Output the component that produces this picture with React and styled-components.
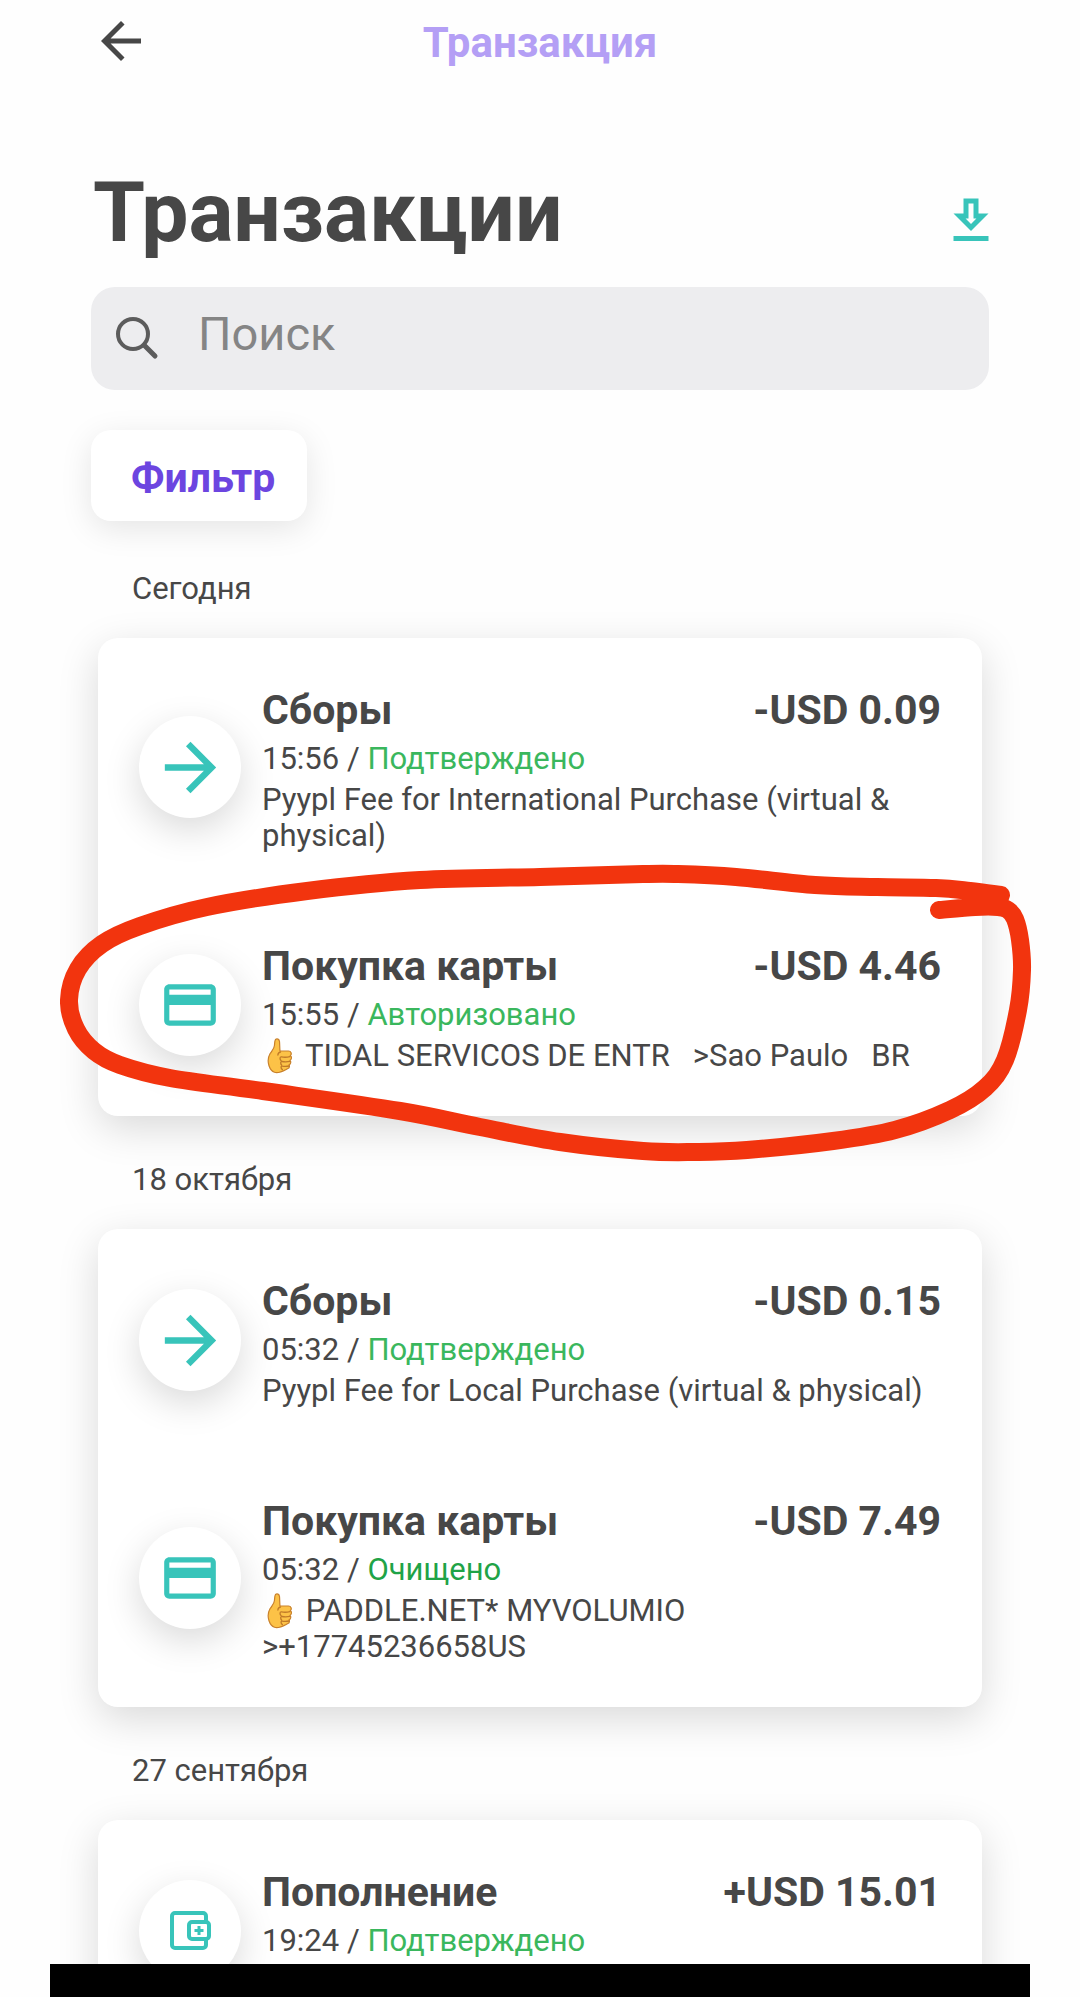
import React from 'react';
import styled, { createGlobalStyle } from 'styled-components';
import { MdArrowBack, MdArrowForward, MdCreditCard, MdOutlineDownload } from 'react-icons/md';

const GlobalStyle = createGlobalStyle`
  * {
    box-sizing: border-box;
  }

  body {
    margin: 0;
    background-color: #fefefe;
    color: #474747;
    font-family: Roboto, 'Noto Sans', sans-serif;
  }

  h1, h2, h3, p, ul {
    margin: 0;
    padding: 0;
  }
`;

const Screen = styled.div`
  display: flex;
  flex-direction: column;
  height: 100vh;
  overflow: hidden;
`;

const Content = styled.main`
  flex: 1;
  min-height: 0;
  padding: 0 91px;
  overflow: hidden;
`;

const Header = styled.header`
  display: grid;
  grid-template-columns: 1fr auto 1fr;
  align-items: center;
  padding: 11px 91px;
`;

const IconButton = styled.button`
  display: flex;
  justify-self: start;
  padding: 0;
  border: none;
  background: none;
  color: ${(props) => props.$color};
  font-size: 60px;
  cursor: pointer;
`;

const HeaderTitle = styled.p`
  padding-top: 4px;
  color: #b49ff5;
  font-size: 42px;
  font-weight: bold;
  line-height: 48px;
`;

const TitleRow = styled.div`
  display: flex;
  align-items: flex-end;
  justify-content: space-between;
  margin: 83px -12px 26px 2px;

  button {
    margin-bottom: 10px;
  }
`;

const Title = styled.h1`
  font-size: 84px;
  line-height: 96px;
`;

const SearchBox = styled.label`
  display: flex;
  align-items: center;
  gap: 38px;
  height: 103px;
  padding: 0 24px;
  border-radius: 24px;
  background-color: #ededef;
`;

const SearchInput = styled.input`
  flex: 1;
  min-width: 0;
  padding: 0 0 10px;
  border: none;
  outline: none;
  background: none;
  color: #474747;
  font-family: inherit;
  font-size: 47px;

  &::placeholder {
    color: #858585;
    opacity: 1;
  }
`;

const FilterButton = styled.button`
  display: block;
  height: 91px;
  margin-top: 40px;
  padding: 4px 32px 0 40px;
  border: none;
  border-radius: 20px;
  background-color: #fff;
  box-shadow: 0 8px 32px rgba(0, 0, 0, 0.1);
  color: #6c45e0;
  font-family: inherit;
  font-size: 41px;
  font-weight: bold;
  cursor: pointer;
`;

const Groups = styled.div`
  padding: 4px 7px 0;
`;

const DateLabel = styled.h2`
  padding: 46px 34px 31px;
  font-size: 31px;
  font-weight: normal;
  line-height: 36px;
`;

const Card = styled.ul`
  position: relative;
  padding: 1px 0;
  border-radius: 20px;
  background-color: #fff;
  box-shadow: 0 12px 40px rgba(0, 0, 0, 0.15);
  list-style: none;
`;

const Row = styled.li`
  display: flex;
  align-items: center;
  gap: 21px;
  padding: 0 41px;
`;

const Circle = styled.div`
  display: flex;
  flex: none;
  align-items: center;
  justify-content: center;
  width: 102px;
  height: 102px;
  border-radius: 50%;
  background-color: #fff;
  box-shadow: 0 12px 36px rgba(0, 0, 0, 0.15);
  color: #38c4ba;
`;

const Details = styled.div`
  flex: 1;
  min-width: 0;
  padding: 47px 0 41px;
`;

const NameLine = styled.div`
  display: flex;
  justify-content: space-between;
  margin-bottom: 7px;
  font-size: 41px;
  font-weight: bold;
  line-height: 48px;
`;

const Name = styled.h3`
  font-size: inherit;
`;

const Text = styled.p`
  font-size: 31px;
  line-height: 36px;
  white-space: pre-wrap;

  & + & {
    margin-top: 5px;
  }
`;

const Status = styled.span`
  color: ${(props) => (props.$cleared ? '#1fa347' : '#3ab75d')};
`;

const Emoji = styled.svg`
  width: 36px;
  height: 36px;
  vertical-align: bottom;
`;

const Mark = styled.svg`
  position: absolute;
  z-index: 2;
  top: 222px;
  left: -38px;
  width: calc(100% + 96px);
  pointer-events: none;
`;

const NavBar = styled.div`
  flex: none;
  height: 33px;
  margin: 0 50px;
  background-color: #000;
`;

const SearchIcon = () => (
  <svg width="45" height="45" viewBox="0 0 45 45" fill="none" stroke="#5c5c5c" strokeLinecap="round">
    <circle cx="18" cy="18" r="15" strokeWidth="4" />
    <path d="M29.5 29.5 40 40" strokeWidth="5" />
  </svg>
);

const WalletIcon = () => (
  <svg width="42" height="42" viewBox="0 0 42 42" fill="none" stroke="currentColor" strokeWidth="4">
    <path d="M37 11V6a3 3 0 0 0-3-3H6a3 3 0 0 0-3 3v29a3 3 0 0 0 3 3h28a3 3 0 0 0 3-3v-5" />
    <rect x="20" y="12" width="20" height="17" rx="3" />
    <path d="M30 16v9M25.5 20.5h9" strokeWidth="3" />
  </svg>
);

const ThumbIcon = () => (
  <Emoji viewBox="0 0 36 36" role="img" aria-label="👍">
    <path
      d="M13.500 1.500c1.600-1.300 3.700-.3 4 2 .3 3 .1 6.200.5 9.500h8.500c2.600 0 3.600 3 1.900 4.500 1.600 1.400 1.300 3.800-.3 4.800 1.100 1.500.7 3.600-1 4.500.7 1.600 0 3.300-1.600 4-3 1.500-8.500 5-13 3.500-2.500-.8-4.500-3.500-5.500-6.500-1.200-3.800-1-8.500 1-12 1.600-2.800 4-4.600 4.400-8 .3-2.200.1-4.600 1.100-6.300z"
      fill="#fcc247"
      stroke="#c9812b"
      strokeWidth="1.200"
    />
    <path
      d="M18.500 14c-1.500.3-2.500 1.300-2.600 3M28 18.700c-3 .6-6 .7-8.500.2-1.800-.4-2 2.700-.3 3.800M28 23.400c-3 .6-5.500.6-8 .1-1.600-.2-1.800 2.500-.2 3.700M27 28c-2.500.5-4.500.5-6.800.1-1.500-.2-1.500 2.400.2 3.500"
      fill="none"
      stroke="#c07a28"
      strokeWidth="1.300"
      strokeLinecap="round"
    />
  </Emoji>
);

const GreenDotIcon = () => (
  <Emoji viewBox="0 0 36 36" aria-hidden="true">
    <circle cx="18" cy="18" r="15" fill="#2faf4a" />
  </Emoji>
);

const icons = {
  fee: <MdArrowForward size={77} />,
  card: <MdCreditCard size={62} />,
  topup: <WalletIcon />,
};

const groups = [
  {
    date: 'Сегодня',
    items: [
      {
        icon: 'fee',
        name: 'Сборы',
        amount: '-USD 0.09',
        time: '15:56',
        status: 'Подтверждено',
        text: 'Pyypl Fee for International Purchase (virtual & physical)',
      },
      {
        icon: 'card',
        name: 'Покупка карты',
        amount: '-USD 4.46',
        time: '15:55',
        status: 'Авторизовано',
        emoji: <ThumbIcon />,
        text: ' TIDAL SERVICOS DE ENTR   >Sao Paulo   BR',
      },
    ],
    marked: true,
  },
  {
    date: '18 октября',
    items: [
      {
        icon: 'fee',
        name: 'Сборы',
        amount: '-USD 0.15',
        time: '05:32',
        status: 'Подтверждено',
        text: 'Pyypl Fee for Local Purchase (virtual & physical)',
      },
      {
        icon: 'card',
        name: 'Покупка карты',
        amount: '-USD 7.49',
        time: '05:32',
        status: 'Очищено',
        cleared: true,
        emoji: <ThumbIcon />,
        text: ' PADDLE.NET* MYVOLUMIO >+17745236658US',
      },
    ],
  },
  {
    date: '27 сентября',
    items: [
      {
        icon: 'topup',
        name: 'Пополнение',
        amount: '+USD 15.01',
        time: '19:24',
        status: 'Подтверждено',
        emoji: <GreenDotIcon />,
      },
    ],
  },
];

// points of the hand-drawn loop
const loop = [
  [941, 35], [910, 31], [876, 28], [817, 27], [755, 25], [676, 17], [618, 14], [583, 14],
  [480, 17], [360, 20], [247, 31], [147, 47], [80, 66], [42, 84], [18, 109],
  [9, 140], [16, 169], [34, 191], [60, 205], [110, 218], [203, 231], [340, 251],
  [420, 267], [500, 282], [583, 291], [635, 292], [687, 290], [773, 281],
  [835, 270], [890, 250], [925, 228], [945, 200], [958, 150], [962, 110], [960, 80],
  [955, 59], [948, 50], [938, 47], [915, 47], [879, 50],
];

// smooth curve through all the points
const smooth = (pts) =>
  pts.slice(0, -1).reduce((d, p, i) => {
    const before = pts[i - 1] || p;
    const next = pts[i + 1];
    const after = pts[i + 2] || next;
    const c1 = [p[0] + (next[0] - before[0]) / 6, p[1] + (next[1] - before[1]) / 6];
    const c2 = [next[0] - (after[0] - p[0]) / 6, next[1] - (after[1] - p[1]) / 6];
    return `${d}C${c1} ${c2} ${next}`;
  }, `M${pts[0]}`);

const Transaction = ({ item }) => (
  <Row>
    <Circle>{icons[item.icon]}</Circle>
    <Details>
      <NameLine>
        <Name>{item.name}</Name>
        <span>{item.amount}</span>
      </NameLine>
      <Text>
        {item.time} / <Status $cleared={item.cleared}>{item.status}</Status>
      </Text>
      <Text>
        {item.emoji}
        {item.text}
      </Text>
    </Details>
  </Row>
);

const App = () => {
  return (
    <Screen>
      <GlobalStyle />
      <Header>
        <IconButton type="button" aria-label="Назад" $color="#474747">
          <MdArrowBack />
        </IconButton>
        <HeaderTitle>Транзакция</HeaderTitle>
      </Header>
      <Content>
        <TitleRow>
          <Title>Транзакции</Title>
          <IconButton type="button" aria-label="Скачать" $color="#38c4ba">
            <MdOutlineDownload />
          </IconButton>
        </TitleRow>
        <SearchBox>
          <SearchIcon />
          <SearchInput type="text" placeholder="Поиск" aria-label="Поиск" />
        </SearchBox>
        <FilterButton type="button">Фильтр</FilterButton>
        <Groups>
          {groups.map((group) => (
            <section key={group.date}>
              <DateLabel>{group.date}</DateLabel>
              <Card>
                {group.items.map((item) => (
                  <Transaction key={item.name} item={item} />
                ))}
                {group.marked && (
                  <Mark viewBox="0 0 980 306" fill="none" aria-hidden="true">
                    <path d={smooth(loop)} stroke="#f2340e" strokeWidth="18" strokeLinecap="round" strokeLinejoin="round" />
                  </Mark>
                )}
              </Card>
            </section>
          ))}
        </Groups>
      </Content>
      <NavBar />
    </Screen>
  );
};

export default App;
